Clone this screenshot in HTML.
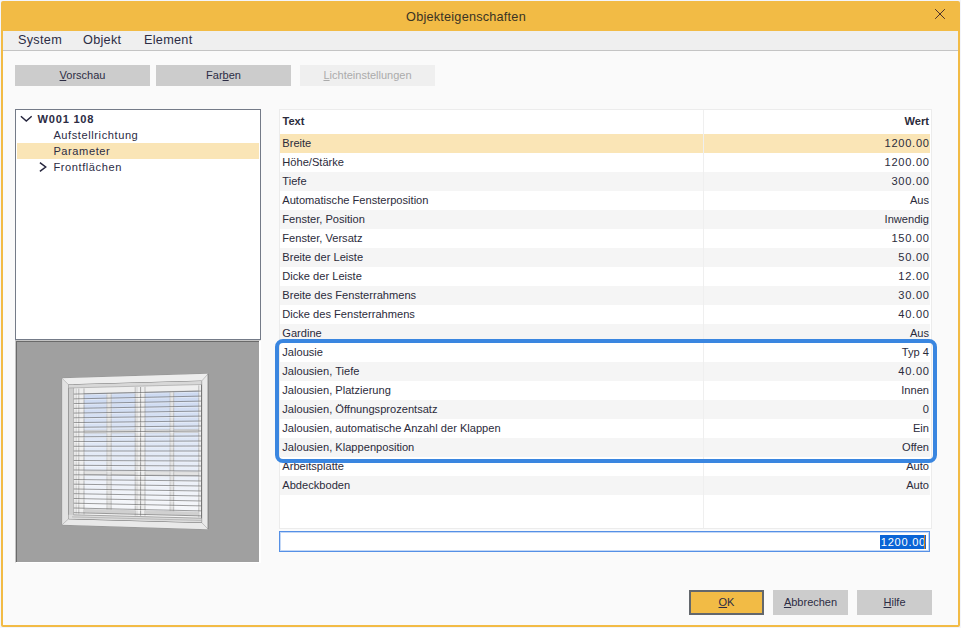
<!DOCTYPE html>
<html lang="de"><head><meta charset="utf-8"><title>Objekteigenschaften</title>
<style>
*{box-sizing:border-box;margin:0;padding:0}
html,body{width:961px;height:628px;overflow:hidden;background:#f3f5fb;font-family:"Liberation Sans",sans-serif;font-size:11.1px;color:#2b2b3b}
.abs{position:absolute}
#win{position:absolute;left:1px;top:1px;width:959px;height:626px;background:#f2bb45;border-radius:2px}
#title{position:absolute;left:0;top:0;width:930px;height:30px;text-align:center;font-size:12.7px;letter-spacing:0.22px;line-height:32px;color:#3a3324}
#menu{position:absolute;left:2px;top:30px;width:955px;height:19px;background:#efefef;font-size:12.7px;letter-spacing:0.28px;color:#2c2c44}
#menu span{position:absolute;top:0;line-height:18px}
#menuline{position:absolute;left:2px;top:49px;width:955px;height:1px;background:#c4c4c4}
#body{position:absolute;left:2px;top:50px;width:955px;height:574px;background:#fafafa}
.btn{position:absolute;height:21px;background:#cccccc;text-align:center;line-height:21px;font-size:11px;color:#2c2c44}
.btn.dis{background:#efefef;color:#ababab}
u{text-decoration:underline;text-underline-offset:1px}
#tree{position:absolute;left:15px;top:109px;width:246px;height:231px;background:#fff;border:1px solid #747b88}
.ti{position:absolute;left:1px;width:242px;height:16px;line-height:16px;font-size:11.1px;letter-spacing:0.57px;color:#2c2c44;white-space:nowrap}
.ti.sel{background:#fae5b6}
#prev{position:absolute;left:15px;top:340px;width:246px;height:223px;background:#a0a0a0;border-left:1px solid #c4c4c4;border-top:1px solid #c4c4c4;border-right:2px solid #fff;border-bottom:1px solid #fff}
#prev i{position:absolute;left:0;top:0;width:243px;height:221px;border-left:1px solid #6a6a6a;border-top:1px solid #6a6a6a}
#tbl{position:absolute;left:279px;top:109px;width:653px;height:420px;background:#fff;border:1px solid #ececec}
.row{position:absolute;left:0;width:650px;height:19px;line-height:19px;white-space:nowrap}
.row.alt{background:#f5f5f5}
.row.sel{background:#fae5b6}
.row .t{position:absolute;left:2.3px}
.row .v{position:absolute;right:1px;text-align:right}
.row .v.n{letter-spacing:0.72px;right:0.3px}
#colsep{position:absolute;left:423px;top:0;width:1px;height:418px;background:#efefef}
#hdr{position:absolute;left:0;top:0;width:650px;height:24px;line-height:23px;font-weight:bold}
#edit{position:absolute;left:279px;top:531px;width:651px;height:21px;background:#fff;border:1px solid #5590e6;box-shadow:inset 0 0 0 1px rgba(85,144,230,0.35)}
#edit span{position:absolute;right:3px;top:3px;height:14px;line-height:14px;background:#0a64d6;color:#fff;letter-spacing:0.72px;padding:0 0 0 1px}
#edit b{position:absolute;right:4px;top:3px;width:1px;height:14px;background:#d9801a}
#hl{position:absolute;left:275px;top:338.5px;width:662px;height:124px;border:4px solid #3a86e0;border-radius:8px}
</style></head><body>
<div id="win">
<div id="title">Objekteigenschaften</div>
<svg class="abs" style="left:933px;top:7px" width="13" height="13" viewBox="0 0 13 13"><path d="M1.5 1.5L10.5 10.5M10.5 1.5L1.5 10.5" stroke="#3c2228" stroke-width="0.9" stroke-linecap="square" fill="none"/></svg>
<div id="menu"><span style="left:15px">System</span><span style="left:80px">Objekt</span><span style="left:141px">Element</span></div>
<div id="menuline"></div>
<div id="body"></div>
</div>
<div class="btn" style="left:15px;top:65px;width:135px"><u>V</u>orschau</div>
<div class="btn" style="left:156px;top:65px;width:135px">Far<u>b</u>en</div>
<div class="btn dis" style="left:300px;top:65px;width:135px"><u>L</u>ichteinstellungen</div>

<div id="tree">
<div class="ti" style="top:1px;font-weight:bold;letter-spacing:0.75px"><span class="abs" style="left:20.6px">W001 108</span></div>
<div class="ti" style="top:17px"><span class="abs" style="left:36.4px">Aufstellrichtung</span></div>
<div class="ti sel" style="top:33px"><span class="abs" style="left:36.4px">Parameter</span></div>
<div class="ti" style="top:49px"><span class="abs" style="left:36.4px">Frontflächen</span></div>
<svg class="abs" style="left:0;top:0" width="40" height="70" viewBox="16 110 40 70"><path d="M20.9 116.3L26.3 121L31.7 116.3M39.9 162.6L45.7 167L39.9 171.4" stroke="#26263e" stroke-width="1.5" fill="none" stroke-linejoin="miter"/></svg>
</div>
<div id="prev"><i></i></div>
<svg class="abs" style="left:17px;top:342px" width="242" height="220" viewBox="17 342 242 220">
<defs><linearGradient id="gl" x1="0" y1="0" x2="0" y2="1"><stop offset="0" stop-color="#ccd9f1"/><stop offset="0.45" stop-color="#e0e8f6"/><stop offset="1" stop-color="#f6f7fa"/></linearGradient></defs>
<polygon points="62.2,378.3 208.1,373.8 208.1,529.2 62.2,524.7" fill="#e6e6e6" stroke="#8c8c8c" stroke-width="0.7"/>
<polygon points="62.2,378.3 208.1,373.8 201.6,381.1 68.6,384.8" fill="#ededed"/>
<polygon points="62.2,524.7 208.1,529.2 201.6,522.5 68.6,518.8" fill="#e9e9e9"/>
<polygon points="62.2,378.3 68.6,384.8 68.6,518.8 62.2,524.7" fill="#e2e2e2"/>
<polygon points="208.1,373.8 201.6,381.1 201.6,522.5 208.1,529.2" fill="#e9e9e9"/>
<line x1="62.2" y1="378.3" x2="68.6" y2="384.8" stroke="#a8a8a8" stroke-width="0.6"/>
<line x1="208.1" y1="373.8" x2="201.6" y2="381.1" stroke="#a8a8a8" stroke-width="0.6"/>
<line x1="62.2" y1="524.7" x2="68.6" y2="518.8" stroke="#a8a8a8" stroke-width="0.6"/>
<line x1="208.1" y1="529.2" x2="201.6" y2="522.5" stroke="#a8a8a8" stroke-width="0.6"/>
<polygon points="68.6,384.8 201.6,381.1 201.6,522.5 68.6,518.8" fill="#eeeeee" stroke="#5c5c5c" stroke-width="0.9"/>
<polygon points="68.6,384.8 73.6,384.7 73.6,518.9 68.6,518.8" fill="#cdcdcd" />
<line x1="73.6" y1="386.7" x2="73.6" y2="516.9" stroke="#9a9a9a" stroke-width="0.6"/>
<polygon points="68.6,384.8 201.6,381.1 201.6,384.5 68.6,388.0" fill="#d8d8d8" />
<line x1="68.6" y1="388.0" x2="201.6" y2="384.5" stroke="#9a9a9a" stroke-width="0.6" opacity="1"/>
<polygon points="68.6,514.7 201.6,518.2 201.6,522.5 68.6,518.8" fill="#dcdcdc" />
<line x1="73.6" y1="514.8" x2="201.6" y2="518.2" stroke="#8a8a8a" stroke-width="0.7" opacity="1"/>
<line x1="72.0" y1="516.9" x2="201.6" y2="520.4" stroke="#a0a0a0" stroke-width="0.6" opacity="1"/>
<polygon points="84.0,393.7 106.9,393.1 106.9,510.1 84.0,509.5" fill="url(#gl)"/>
<polygon points="111.2,393.0 135.2,392.5 135.2,510.8 111.2,510.2" fill="url(#gl)"/>
<polygon points="145.0,392.2 170.0,391.6 170.0,511.6 145.0,511.0" fill="url(#gl)"/>
<polygon points="173.7,391.5 198.8,390.9 198.8,512.3 173.7,511.7" fill="url(#gl)"/>
<polygon points="84.0,430.4 135.2,430.0 135.2,432.8 84.0,433.2" fill="#e3e3e3" />
<polygon points="84.0,471.0 135.2,471.4 135.2,474.9 84.0,474.4" fill="#e3e3e3" />
<line x1="84.0" y1="430.4" x2="135.2" y2="430.0" stroke="#b0b0b0" stroke-width="0.5" opacity="1"/>
<line x1="84.0" y1="433.2" x2="135.2" y2="432.8" stroke="#a0a0a0" stroke-width="0.5" opacity="1"/>
<line x1="84.0" y1="471.0" x2="135.2" y2="471.4" stroke="#b0b0b0" stroke-width="0.5" opacity="1"/>
<line x1="84.0" y1="474.4" x2="135.2" y2="474.9" stroke="#a0a0a0" stroke-width="0.5" opacity="1"/>
<polygon points="145.0,429.9 198.8,429.4 198.8,432.4 145.0,432.8" fill="#e3e3e3" />
<polygon points="145.0,471.5 198.8,471.9 198.8,475.5 145.0,475.0" fill="#e3e3e3" />
<line x1="145.0" y1="429.9" x2="198.8" y2="429.4" stroke="#b0b0b0" stroke-width="0.5" opacity="1"/>
<line x1="145.0" y1="432.8" x2="198.8" y2="432.4" stroke="#a0a0a0" stroke-width="0.5" opacity="1"/>
<line x1="145.0" y1="471.5" x2="198.8" y2="471.9" stroke="#b0b0b0" stroke-width="0.5" opacity="1"/>
<line x1="145.0" y1="475.0" x2="198.8" y2="475.5" stroke="#a0a0a0" stroke-width="0.5" opacity="1"/>
<polygon points="106.9,393.1 111.2,393.0 111.2,510.2 106.9,510.1" fill="#e4e4e4" />
<line x1="106.9" y1="393.1" x2="106.9" y2="510.1" stroke="#b4b4b4" stroke-width="0.6"/>
<line x1="111.2" y1="393.0" x2="111.2" y2="510.2" stroke="#a4a4a4" stroke-width="0.6"/>
<polygon points="170.0,391.6 173.7,391.5 173.7,511.7 170.0,511.6" fill="#e4e4e4" />
<line x1="170" y1="391.6" x2="170" y2="511.6" stroke="#b4b4b4" stroke-width="0.6"/>
<line x1="173.7" y1="391.5" x2="173.7" y2="511.7" stroke="#a4a4a4" stroke-width="0.6"/>
<line x1="76.2" y1="388.6" x2="76.2" y2="514.4" stroke="#b8b8b8" stroke-width="0.6"/>
<line x1="78.8" y1="388.6" x2="78.8" y2="514.4" stroke="#a8a8a8" stroke-width="0.7"/>
<line x1="84" y1="388.4" x2="84" y2="514.6" stroke="#9c9c9c" stroke-width="0.7"/>
<line x1="135.2" y1="387.1" x2="135.2" y2="515.9" stroke="#a4a4a4" stroke-width="0.7"/>
<line x1="137" y1="387.0" x2="137" y2="516.0" stroke="#c0c0c0" stroke-width="0.6"/>
<line x1="140.6" y1="387.0" x2="140.6" y2="516.0" stroke="#8c8c8c" stroke-width="0.8"/>
<line x1="145" y1="386.8" x2="145" y2="516.2" stroke="#a0a0a0" stroke-width="0.7"/>
<line x1="198.8" y1="385.4" x2="198.8" y2="517.6" stroke="#a4a4a4" stroke-width="0.7"/>
<line x1="84.0" y1="393.7" x2="135.2" y2="392.5" stroke="#a8a8a8" stroke-width="0.6" opacity="1"/>
<line x1="84.0" y1="509.5" x2="135.2" y2="510.8" stroke="#909090" stroke-width="0.7" opacity="1"/>
<line x1="145.0" y1="392.2" x2="198.8" y2="390.9" stroke="#a8a8a8" stroke-width="0.6" opacity="1"/>
<line x1="145.0" y1="511.0" x2="198.8" y2="512.3" stroke="#909090" stroke-width="0.7" opacity="1"/>
<polygon points="84.0,509.5 135.2,510.8 135.2,513.8 84.0,512.6" fill="#d0d0d0" />
<polygon points="145.0,511.0 198.8,512.3 198.8,515.5 145.0,514.1" fill="#d0d0d0" />
<line x1="74.0" y1="395.0" x2="201.2" y2="392.0" stroke="#ffffff" stroke-width="1.0" opacity="0.4"/>
<line x1="73.8" y1="394.1" x2="201.2" y2="391.1" stroke="#606060" stroke-width="0.7" opacity="0.85"/>
<line x1="74.0" y1="399.8" x2="201.2" y2="397.0" stroke="#ffffff" stroke-width="1.0" opacity="0.4"/>
<line x1="73.8" y1="398.9" x2="201.2" y2="396.1" stroke="#606060" stroke-width="0.7" opacity="0.85"/>
<line x1="74.0" y1="404.5" x2="201.2" y2="402.0" stroke="#ffffff" stroke-width="1.0" opacity="0.4"/>
<line x1="73.8" y1="403.6" x2="201.2" y2="401.1" stroke="#606060" stroke-width="0.7" opacity="0.85"/>
<line x1="74.0" y1="409.3" x2="201.2" y2="407.0" stroke="#ffffff" stroke-width="1.0" opacity="0.4"/>
<line x1="73.8" y1="408.4" x2="201.2" y2="406.1" stroke="#606060" stroke-width="0.7" opacity="0.85"/>
<line x1="74.0" y1="414.0" x2="201.2" y2="412.0" stroke="#ffffff" stroke-width="1.0" opacity="0.4"/>
<line x1="73.8" y1="413.1" x2="201.2" y2="411.1" stroke="#606060" stroke-width="0.7" opacity="0.85"/>
<line x1="74.0" y1="418.7" x2="201.2" y2="417.0" stroke="#ffffff" stroke-width="1.0" opacity="0.4"/>
<line x1="73.8" y1="417.8" x2="201.2" y2="416.1" stroke="#606060" stroke-width="0.7" opacity="0.85"/>
<line x1="74.0" y1="423.5" x2="201.2" y2="422.0" stroke="#ffffff" stroke-width="1.0" opacity="0.4"/>
<line x1="73.8" y1="422.6" x2="201.2" y2="421.0" stroke="#606060" stroke-width="0.7" opacity="0.85"/>
<line x1="74.0" y1="428.2" x2="201.2" y2="427.0" stroke="#ffffff" stroke-width="1.0" opacity="0.4"/>
<line x1="73.8" y1="427.3" x2="201.2" y2="426.0" stroke="#606060" stroke-width="0.7" opacity="0.85"/>
<line x1="74.0" y1="433.0" x2="201.2" y2="432.0" stroke="#ffffff" stroke-width="1.0" opacity="0.4"/>
<line x1="73.8" y1="432.1" x2="201.2" y2="431.0" stroke="#606060" stroke-width="0.7" opacity="0.85"/>
<line x1="74.0" y1="437.7" x2="201.2" y2="437.0" stroke="#ffffff" stroke-width="1.0" opacity="0.4"/>
<line x1="73.8" y1="436.8" x2="201.2" y2="436.0" stroke="#606060" stroke-width="0.7" opacity="0.85"/>
<line x1="74.0" y1="442.5" x2="201.2" y2="442.0" stroke="#ffffff" stroke-width="1.0" opacity="0.4"/>
<line x1="73.8" y1="441.6" x2="201.2" y2="441.0" stroke="#606060" stroke-width="0.7" opacity="0.85"/>
<line x1="74.0" y1="447.2" x2="201.2" y2="447.0" stroke="#ffffff" stroke-width="1.0" opacity="0.4"/>
<line x1="73.8" y1="446.3" x2="201.2" y2="446.0" stroke="#606060" stroke-width="0.7" opacity="0.85"/>
<line x1="74.0" y1="451.9" x2="201.2" y2="452.0" stroke="#ffffff" stroke-width="1.0" opacity="0.4"/>
<line x1="73.8" y1="451.0" x2="201.2" y2="451.0" stroke="#606060" stroke-width="0.7" opacity="0.85"/>
<line x1="74.0" y1="456.7" x2="201.2" y2="457.0" stroke="#ffffff" stroke-width="1.0" opacity="0.4"/>
<line x1="73.8" y1="455.8" x2="201.2" y2="456.0" stroke="#606060" stroke-width="0.7" opacity="0.85"/>
<line x1="74.0" y1="461.4" x2="201.2" y2="462.0" stroke="#ffffff" stroke-width="1.0" opacity="0.4"/>
<line x1="73.8" y1="460.5" x2="201.2" y2="461.0" stroke="#606060" stroke-width="0.7" opacity="0.85"/>
<line x1="74.0" y1="466.2" x2="201.2" y2="466.9" stroke="#ffffff" stroke-width="1.0" opacity="0.4"/>
<line x1="73.8" y1="465.3" x2="201.2" y2="466.0" stroke="#606060" stroke-width="0.7" opacity="0.85"/>
<line x1="74.0" y1="470.9" x2="201.2" y2="471.9" stroke="#ffffff" stroke-width="1.0" opacity="0.4"/>
<line x1="73.8" y1="470.0" x2="201.2" y2="471.0" stroke="#606060" stroke-width="0.7" opacity="0.85"/>
<line x1="74.0" y1="475.7" x2="201.2" y2="476.9" stroke="#ffffff" stroke-width="1.0" opacity="0.4"/>
<line x1="73.8" y1="474.8" x2="201.2" y2="476.0" stroke="#606060" stroke-width="0.7" opacity="0.85"/>
<line x1="74.0" y1="480.4" x2="201.2" y2="481.9" stroke="#ffffff" stroke-width="1.0" opacity="0.4"/>
<line x1="73.8" y1="479.5" x2="201.2" y2="481.0" stroke="#606060" stroke-width="0.7" opacity="0.85"/>
<line x1="74.0" y1="485.1" x2="201.2" y2="486.9" stroke="#ffffff" stroke-width="1.0" opacity="0.4"/>
<line x1="73.8" y1="484.2" x2="201.2" y2="486.0" stroke="#606060" stroke-width="0.7" opacity="0.85"/>
<line x1="74.0" y1="489.9" x2="201.2" y2="491.9" stroke="#ffffff" stroke-width="1.0" opacity="0.4"/>
<line x1="73.8" y1="489.0" x2="201.2" y2="491.0" stroke="#606060" stroke-width="0.7" opacity="0.85"/>
<line x1="74.0" y1="494.6" x2="201.2" y2="496.9" stroke="#ffffff" stroke-width="1.0" opacity="0.4"/>
<line x1="73.8" y1="493.7" x2="201.2" y2="496.0" stroke="#606060" stroke-width="0.7" opacity="0.85"/>
<line x1="74.0" y1="499.4" x2="201.2" y2="501.9" stroke="#ffffff" stroke-width="1.0" opacity="0.4"/>
<line x1="73.8" y1="498.5" x2="201.2" y2="501.0" stroke="#606060" stroke-width="0.7" opacity="0.85"/>
<line x1="74.0" y1="504.1" x2="201.2" y2="506.9" stroke="#ffffff" stroke-width="1.0" opacity="0.4"/>
<line x1="73.8" y1="503.2" x2="201.2" y2="505.9" stroke="#606060" stroke-width="0.7" opacity="0.85"/>
<line x1="74.0" y1="508.9" x2="201.2" y2="511.9" stroke="#ffffff" stroke-width="1.0" opacity="0.4"/>
<line x1="73.8" y1="508.0" x2="201.2" y2="510.9" stroke="#606060" stroke-width="0.7" opacity="0.85"/>
<line x1="74.0" y1="513.6" x2="201.2" y2="516.9" stroke="#ffffff" stroke-width="1.0" opacity="0.4"/>
<line x1="73.8" y1="512.7" x2="201.2" y2="515.9" stroke="#606060" stroke-width="0.7" opacity="0.85"/>
<line x1="208.1" y1="373.8" x2="208.1" y2="529.2" stroke="#7c7c7c" stroke-width="1"/>
</svg>

<div id="tbl">
<div id="hdr"><span class="abs" style="left:2.5px">Text</span><span class="abs" style="right:1px">Wert</span></div>
<div id="rows">
<div class="row sel" style="top:24px"><span class="t">Breite</span><span class="v n">1200.00</span></div>
<div class="row" style="top:43px"><span class="t">Höhe/Stärke</span><span class="v n">1200.00</span></div>
<div class="row alt" style="top:62px"><span class="t">Tiefe</span><span class="v n">300.00</span></div>
<div class="row" style="top:81px"><span class="t">Automatische Fensterposition</span><span class="v">Aus</span></div>
<div class="row alt" style="top:100px"><span class="t">Fenster, Position</span><span class="v">Inwendig</span></div>
<div class="row" style="top:119px"><span class="t">Fenster, Versatz</span><span class="v n">150.00</span></div>
<div class="row alt" style="top:138px"><span class="t">Breite der Leiste</span><span class="v n">50.00</span></div>
<div class="row" style="top:157px"><span class="t">Dicke der Leiste</span><span class="v n">12.00</span></div>
<div class="row alt" style="top:176px"><span class="t">Breite des Fensterrahmens</span><span class="v n">30.00</span></div>
<div class="row" style="top:195px"><span class="t">Dicke des Fensterrahmens</span><span class="v n">40.00</span></div>
<div class="row alt" style="top:214px"><span class="t">Gardine</span><span class="v">Aus</span></div>
<div class="row" style="top:233px"><span class="t">Jalousie</span><span class="v">Typ 4</span></div>
<div class="row alt" style="top:252px"><span class="t">Jalousien, Tiefe</span><span class="v n">40.00</span></div>
<div class="row" style="top:271px"><span class="t">Jalousien, Platzierung</span><span class="v">Innen</span></div>
<div class="row alt" style="top:290px"><span class="t">Jalousien, Öffnungsprozentsatz</span><span class="v n">0</span></div>
<div class="row" style="top:309px"><span class="t">Jalousien, automatische Anzahl der Klappen</span><span class="v">Ein</span></div>
<div class="row alt" style="top:328px"><span class="t">Jalousien, Klappenposition</span><span class="v">Offen</span></div>
<div class="row" style="top:347px"><span class="t">Arbeitsplatte</span><span class="v">Auto</span></div>
<div class="row alt" style="top:366px"><span class="t">Abdeckboden</span><span class="v">Auto</span></div>
</div>
<div id="colsep"></div>
</div>
<div id="hl"></div>
<div id="edit"><span>1200.00</span><b></b></div>

<div class="btn" style="left:689px;top:590px;width:75px;height:25px;line-height:21px;background:#f2bb45;border:2px solid #63676c"><u>O</u>K</div>
<div class="btn" style="left:773px;top:590px;width:75px;height:25px;line-height:25px"><u>A</u>bbrechen</div>
<div class="btn" style="left:857px;top:590px;width:75px;height:25px;line-height:25px"><u>H</u>ilfe</div>
</body></html>
